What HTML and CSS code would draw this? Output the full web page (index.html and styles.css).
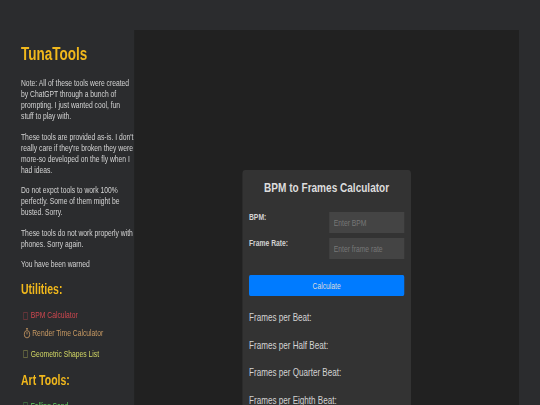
FILE: index.html
```html
<!DOCTYPE html>
<html lang="en">
<head>
    <meta charset="UTF-8">
    <meta name="viewport" content="width=device-width, initial-scale=1.0">
    <title>TunaTools</title>
    <link rel="stylesheet" href="styles.css">
</head>
<body>
    <!-- the whole page is squeezed sideways to 3/4 -->
    <div class="page">
        <aside class="sidebar">
            <h1>TunaTools</h1>
            <p>Note: All of these tools were created by ChatGPT through a bunch of prompting. I just wanted cool, fun stuff to play with.</p>
            <p>These tools are provided as-is. I don't really care if they're broken they were more-so developed on the fly when I had ideas.</p>
            <p>Do not expct tools to work 100% perfectly. Some of them might be busted. Sorry.</p>
            <p>These tools do not work properly with phones. Sorry again.</p>
            <p>You have been warned</p>

            <h2>Utilities:</h2>
            <ul class="tool-list">
                <li class="red"><span class="tofu"></span>BPM Calculator</li>
                <li class="orange">
                    <svg class="stopwatch" viewBox="0 0 10 12" width="10" height="11">
                        <path d="M3.5 .7h3M5 .7v1.6" fill="none" stroke="currentColor"/>
                        <circle cx="5" cy="6.8" r="4" fill="none" stroke="currentColor"/>
                        <path d="M5 4.4v2.6" fill="none" stroke="currentColor"/>
                    </svg>Render Time Calculator
                </li>
                <li class="yellow"><span class="tofu"></span>Geometric Shapes List</li>
            </ul>

            <h2>Art Tools:</h2>
            <ul class="tool-list">
                <li class="green"><span class="tofu"></span>Falling Sand</li>
            </ul>
        </aside>

        <main class="content">
            <div class="calculator">
                <h3>BPM to Frames Calculator</h3>
                <div class="field">
                    <label for="bpm">BPM:</label>
                    <input id="bpm" type="text" placeholder="Enter BPM">
                </div>
                <div class="field">
                    <label for="rate">Frame Rate:</label>
                    <input id="rate" type="text" placeholder="Enter frame rate">
                </div>
                <button type="button">Calculate</button>
                <p class="result">Frames per Beat:</p>
                <p class="result">Frames per Half Beat:</p>
                <p class="result">Frames per Quarter Beat:</p>
                <p class="result">Frames per Eighth Beat:</p>
            </div>
        </main>
    </div>
</body>
</html>
```

FILE: styles.css
```css
html, body {
    margin: 0;
    height: 405px;
    overflow: hidden;
    background-color: #2b2c2e;
}
.page {
    font-family: "Liberation Sans", Arial, sans-serif;
    color: #d4d4d4;
    width: 720px;
    height: 405px;
    overflow: hidden;
    display: flex;
    padding: 30px 28px 0;
    box-sizing: border-box;
    transform: scaleX(.75);
    transform-origin: 0 0;
    filter: blur(.25px);
}
.sidebar {
    width: 151px;
    flex-shrink: 0;
    font-size: 9px;
    line-height: 11px;
}
.sidebar h1 {
    font-size: 18px;
    line-height: 21px;
    color: #f1b81c;
    margin: 14px 0 13px;
}
.sidebar h2 {
    font-size: 14px;
    line-height: 16px;
    color: #f1b81c;
    margin: 11px 0 13px;
}
.sidebar ul + h2 {
    margin-top: 12px;
}
.sidebar p {
    margin: 0 0 9.5px;
}
.tool-list {
    list-style: none;
    margin: 0;
    padding: 0;
}
.tool-list li {
    display: flex;
    align-items: center;
    height: 11px;
    margin-bottom: 9.5px;
    white-space: nowrap;
}
.tool-list .red {
    margin-bottom: 7px;
}
.tofu {
    width: 4px;
    height: 6px;
    border: 1px solid currentColor;
    opacity: .35;
    margin: 0 4px 0 3px;
    flex-shrink: 0;
}
.stopwatch {
    margin: 0 2px 0 3px;
    flex-shrink: 0;
}
.red { color: #d0474f; }
.orange { color: #c99a63; }
.yellow { color: #d3d865; }
.green { color: #5fd05f; }
.content {
    flex: 1;
    height: 375px;
    background-color: #212121;
    display: flex;
    justify-content: center;
    padding-top: 140px;
    box-sizing: border-box;
    overflow: hidden;
}
.calculator {
    width: 225px;
    height: 300px;
    flex-shrink: 0;
    background-color: #333;
    border-radius: 4px;
    padding: 10px 9px;
    box-sizing: border-box;
}
.calculator h3 {
    font-size: 13.4px;
    line-height: 16px;
    text-align: center;
    color: #ddd;
    margin: 0 0 16px;
}
.field {
    display: flex;
    justify-content: space-between;
    align-items: flex-start;
    margin-bottom: 5px;
}
.field label {
    font-size: 9px;
    font-weight: bold;
    line-height: 11px;
}
.field input {
    width: 100px;
    height: 21px;
    box-sizing: border-box;
    background-color: #444;
    border: 0;
    padding: 0 6px;
    font: 9px "Liberation Sans", Arial, sans-serif;
    color: #ccc;
}
.field input::placeholder {
    color: #777;
}
button {
    display: block;
    width: 100%;
    height: 21px;
    margin: 16px 0 15px;
    border: 0;
    border-radius: 2px;
    background-color: #007bff;
    color: #ddd;
    font: 9px "Liberation Sans", Arial, sans-serif;
}
.result {
    font-size: 10.8px;
    line-height: 13px;
    margin: 0 0 14.5px;
}
```
